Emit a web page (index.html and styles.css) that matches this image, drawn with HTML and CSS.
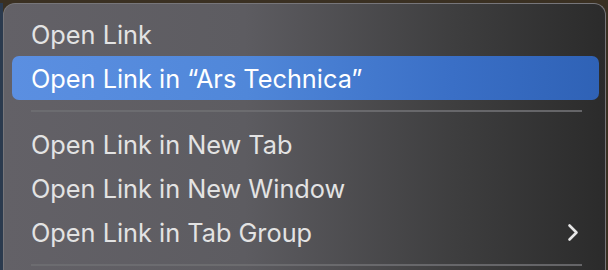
FILE: index.html
```html
<!DOCTYPE html>
<html>
<head>
<meta charset="utf-8">
<link rel="stylesheet" href="styles.css">
</head>
<body>
<div class="desk">
  <div class="menu">
    <div class="item">Open Link</div>
    <div class="item active">Open Link in “Ars Technica”</div>
    <div class="sep"></div>
    <div class="item">Open Link in New Tab</div>
    <div class="item">Open Link in New Window</div>
    <div class="item sub">Open Link in Tab Group
      <svg class="chev" width="12" height="19" viewBox="0 0 12 19"><path d="M2.5 2.5 L9.5 9.5 L2.5 16.5" fill="none" stroke="#e6e6e6" stroke-width="2.6" stroke-linecap="round" stroke-linejoin="round"/></svg>
    </div>
    <div class="sep"></div>
  </div>
</div>
</body>
</html>
```

FILE: styles.css
```css
html, body {
  margin: 0;
  padding: 0;
  width: 608px;
  height: 270px;
  overflow: hidden;
}
body {
  background: #3a3022;
}
.desk {
  width: 608px;
  height: 270px;
  overflow: hidden;
  padding: 3px 2px 0 3px;
  box-sizing: border-box;
  background: linear-gradient(to bottom, #3a3022 0, #3a3022 3px, transparent 3px),
              linear-gradient(to right, #2b3a4e 0, #2b3a4e 3px, #3a3022 3px);
}
.menu {
  box-sizing: border-box;
  height: 267px;
  border: 1px solid #77767a;
  border-bottom: none;
  border-radius: 12px 12px 0 0;
  background: linear-gradient(to right, #636167 0%, #5d5c61 40%, #3e3e3f 75%, #2b2b2b 100%);
  padding: 8px 6px 0 8px;
  font-family: "Inter", "Liberation Sans", sans-serif;
  font-size: 25.3px;
  color: #e3e3e3;
  display: flex;
  flex-direction: column;
}
.item {
  flex: none;
  height: 44px;
  padding-left: 19px;
  display: flex;
  align-items: center;
  border-radius: 7px;
}
.item.active {
  color: #ffffff;
  background: linear-gradient(to right, #5b8fe1 0%, #5087d9 40%, #3a6fc6 75%, #2f62b6 100%);
}
.sub {
  justify-content: space-between;
  padding-right: 20px;
}
.chev {
  display: block;
}
.sep {
  flex: none;
  height: 2px;
  margin: 10px 17px 10px 19px;
  background: #6f6e72;
  opacity: 0.85;
}
```
